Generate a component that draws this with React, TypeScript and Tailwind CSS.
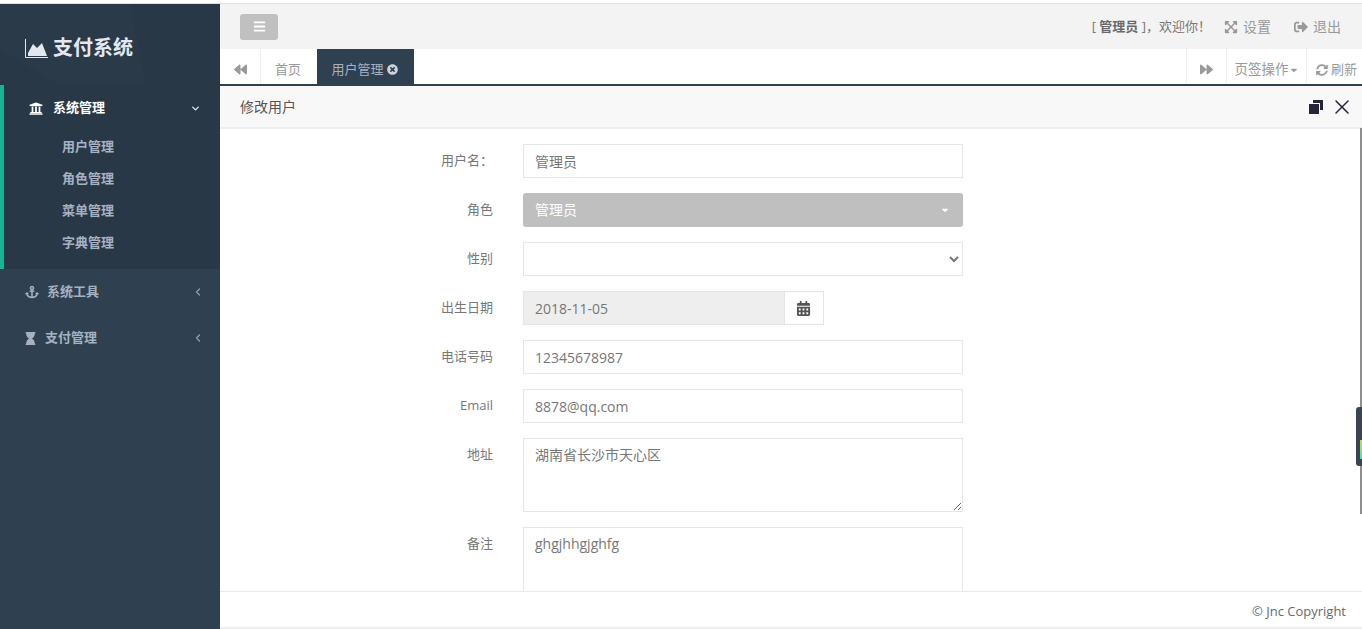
import React from 'react';
import {
  FaAnchor, FaBars, FaBackward, FaCalendarAlt, FaCaretDown,
  FaForward, FaHourglass, FaSignOutAlt, FaSyncAlt, FaTimesCircle, FaUniversity, FaExpandArrowsAlt,
} from 'react-icons/fa';
import { ChevronDown, ChevronLeft, X } from 'lucide-react';

const FONT = "font-['Open_Sans','Noto_Sans_CJK_SC',sans-serif]";
const SUB_MENU = ['用户管理', '角色管理', '菜单管理', '字典管理'];

function Field({ label, children }: { label: string; children: React.ReactNode }) {
  return (
    <div className="flex mb-[15px]">
      <label className="w-[273px] shrink-0 pt-[7px] text-right text-[13px] leading-[19px] text-[#777]">{label}</label>
      <div className="ml-[30px] w-[440px] shrink-0">{children}</div>
    </div>
  );
}

const inputCls =
  'block w-full h-[34px] border border-[#e5e6e7] bg-white px-[11px] text-[14px] text-[#777] outline-none';

function Sidebar() {
  return (
    <aside className="w-[220px] shrink-0 bg-[#2f4050] font-semibold">
      <div className="relative h-[81px] overflow-hidden bg-[#293846]">
        <svg className="absolute inset-0" width="220" height="81" viewBox="0 0 220 81">
          <polygon points="0,0 130,0 146,81 0,81" fill="#2a3a49" />
          <polygon points="0,45 60,81 0,81" fill="#293846" />
        </svg>
        <div className="relative flex items-center pl-[25px] pt-[31px] text-[20px] leading-[26px] font-bold text-[#e3e8f0]">
          <svg className="mr-[5px]" width="23" height="19" viewBox="0 0 23 19">
            <path d="M0.5 0v18.5H23" fill="none" stroke="currentColor" />
            <path d="M3 17V14L8 5l4 4 5-5 5 13z" fill="currentColor" />
          </svg>
          支付系统
        </div>
      </div>
      <div className="h-[184px] border-l-4 border-[#1ab394] bg-[#293846]">
        <div className="flex h-[46px] items-center pl-[25px] pr-[19px] text-[13px] text-white">
          <FaUniversity className="mr-[10px] w-[14px] text-[15px]" />
          <span className="flex-1">系统管理</span>
          <ChevronDown className="h-[11px] w-[11px] text-[#e3e8f0]" strokeWidth={3} />
        </div>
        <ul className="text-[13px] text-[#a7b1c2]">
          {SUB_MENU.map(item => (
            <li key={item} className="flex h-[32px] items-center pl-[58px]">{item}</li>
          ))}
        </ul>
      </div>
      <div className="flex h-[46px] items-center pl-[25px] pr-[16px] text-[13px] text-[#a7b1c2]">
        <FaAnchor className="mr-[8px] w-[14px] text-[14px]" />
        <span className="flex-1">系统工具</span>
        <ChevronLeft className="h-[12px] w-[12px] text-[#8ba0bd]" strokeWidth={2.5} />
      </div>
      <div className="flex h-[46px] items-center pl-[25px] pr-[16px] text-[13px] text-[#a7b1c2]">
        <FaHourglass className="mr-[9px] w-[11px] text-[13px]" />
        <span className="flex-1">支付管理</span>
        <ChevronLeft className="h-[12px] w-[12px] text-[#8ba0bd]" strokeWidth={2.5} />
      </div>
    </aside>
  );
}

function TopBar() {
  return (
    <div className="flex h-[45px] items-center bg-[#f3f3f4] pl-5 pr-[21px] text-[13px] text-[#999]">
      <button className="flex h-[26px] w-[38px] items-center justify-center rounded-[3px] bg-[#c0c0c0] text-white">
        <FaBars className="text-[13px]" />
      </button>
      <div className="ml-auto flex items-center">
        <span className="mr-[13px] text-[#777]">
          [ <b className="text-[#676a6c]">管理员</b> ]，欢迎你！
        </span>
        <FaExpandArrowsAlt className="mr-[5px] text-[14px]" />
        <span className="mr-[23px] text-[14px]">设置</span>
        <FaSignOutAlt className="mr-[5px] text-[14px]" />
        <span className="text-[14px]">退出</span>
      </div>
    </div>
  );
}

function TabStrip() {
  return (
    <div className="flex h-[37px] border-b-2 border-[#2f4050] bg-white text-[13px] text-[#999]">
      <div className="flex w-[41px] items-center justify-center border-r border-[#eee] pt-[6px]"><FaBackward className="text-[13px]" /></div>
      <div className="flex w-[56px] items-center justify-center pr-[2px] pt-[6px]">首页</div>
      <div className="flex w-[97px] items-center justify-center bg-[#2f4050] pr-[2px] pt-[6px] text-[#a7b1c2]">
        用户管理
        <FaTimesCircle className="ml-[3px] text-[11px] text-[#ccd3dd]" />
      </div>
      <div className="ml-auto flex w-[41px] items-center justify-center border-x border-[#eee] pt-[6px]"><FaForward className="text-[13px]" /></div>
      <div className="flex w-[80px] items-center justify-center border-r border-[#eee] pt-[6px] text-[13.5px]">
        页签操作<FaCaretDown className="text-[10px]" />
      </div>
      <div className="flex w-[55px] items-center justify-end pr-[5px] pt-[6px]">
        <FaSyncAlt className="mr-[3px] text-[12px]" />刷新
      </div>
    </div>
  );
}

function UserForm() {
  return (
    <form className="pt-[15px]">
      <Field label="用户名：">
        <input className={inputCls} readOnly value="管理员" />
      </Field>
      <Field label="角色">
        <div className="flex h-[34px] items-center justify-between rounded-[3px] bg-[#bfbfbf] pb-[1px] pl-3 pr-[13px] text-[14px] text-white">
          管理员
          <FaCaretDown className="text-[10px]" />
        </div>
      </Field>
      <Field label="性别">
        <select className={inputCls + ' pl-2'} defaultValue="">
          <option value=""></option>
        </select>
      </Field>
      <Field label="出生日期">
        <div className="flex w-[301px]">
          <input className={inputCls + ' !bg-[#eee] flex-1 min-w-0'} readOnly value="2018-11-05" />
          <span className="flex h-[34px] w-[39px] shrink-0 items-center justify-center border border-l-0 border-[#e5e6e7] bg-white pr-[2px] text-[15px] text-[#555]">
            <FaCalendarAlt />
          </span>
        </div>
      </Field>
      <Field label="电话号码">
        <input className={inputCls} readOnly value="12345678987" />
      </Field>
      <Field label="Email">
        <input className={inputCls} readOnly value="8878@qq.com" />
      </Field>
      <Field label="地址">
        <textarea className={inputCls + ' !h-[74px] py-[6px] leading-[20px]'} readOnly value="湖南省长沙市天心区" />
      </Field>
      <Field label="备注">
        <textarea className={inputCls + ' !h-[74px] py-[6px] leading-[20px]'} readOnly value="ghgjhhgjghfg" />
      </Field>
    </form>
  );
}

export default function App() {
  return (
    <div className={`flex h-[629px] w-[1362px] flex-col overflow-hidden bg-white ${FONT}`}>
      <div className="h-[4px] shrink-0 border-b border-[#e0e0e0] bg-white" />
      <div className="flex min-h-0 flex-1">
        <Sidebar />
        <main className="relative flex min-w-0 flex-1 flex-col">
          <TopBar />
          <TabStrip />
          <div className="flex h-[43px] shrink-0 items-center border-b-2 border-[#eceef1] bg-[#f8f8f8] pl-5 pr-[8px] text-[14px] text-[#555]">
            修改用户
            <svg className="ml-auto mr-[7px]" width="14" height="14" viewBox="0 0 14 14">
              <rect x="0" y="4" width="10" height="10" fill="#25253a" />
              <path d="M4 0h10v10h-3V3H4z" fill="#25253a" />
            </svg>
            <X className="h-[24px] w-[24px] text-[#25253a]" strokeWidth={1.5} />
          </div>
          <div className="min-h-0 flex-1 overflow-hidden bg-white">
            <UserForm />
          </div>
          <footer className="flex h-[38px] shrink-0 items-center justify-end border-t border-b-2 border-t-[#e7eaec] border-b-[#eee] bg-white pr-4 pt-[5px] text-[13px] text-[#676a6c]">
            © Jnc Copyright
          </footer>
          {/* scrollbar thumb and the floating widget lie over the page */}
          <div className="absolute right-0 top-[124px] h-[386px] w-[2px] bg-[#8e8e8e]" />
          <div className="absolute right-0 top-[403px] h-[59px] w-[6px] rounded-l-[3px] bg-[#3c4454]">
            <div className="absolute bottom-[7px] right-0 h-[19px] w-[2px] bg-gradient-to-b from-[#b7e04a] to-[#3ce0b0]" />
          </div>
        </main>
      </div>
    </div>
  );
}
